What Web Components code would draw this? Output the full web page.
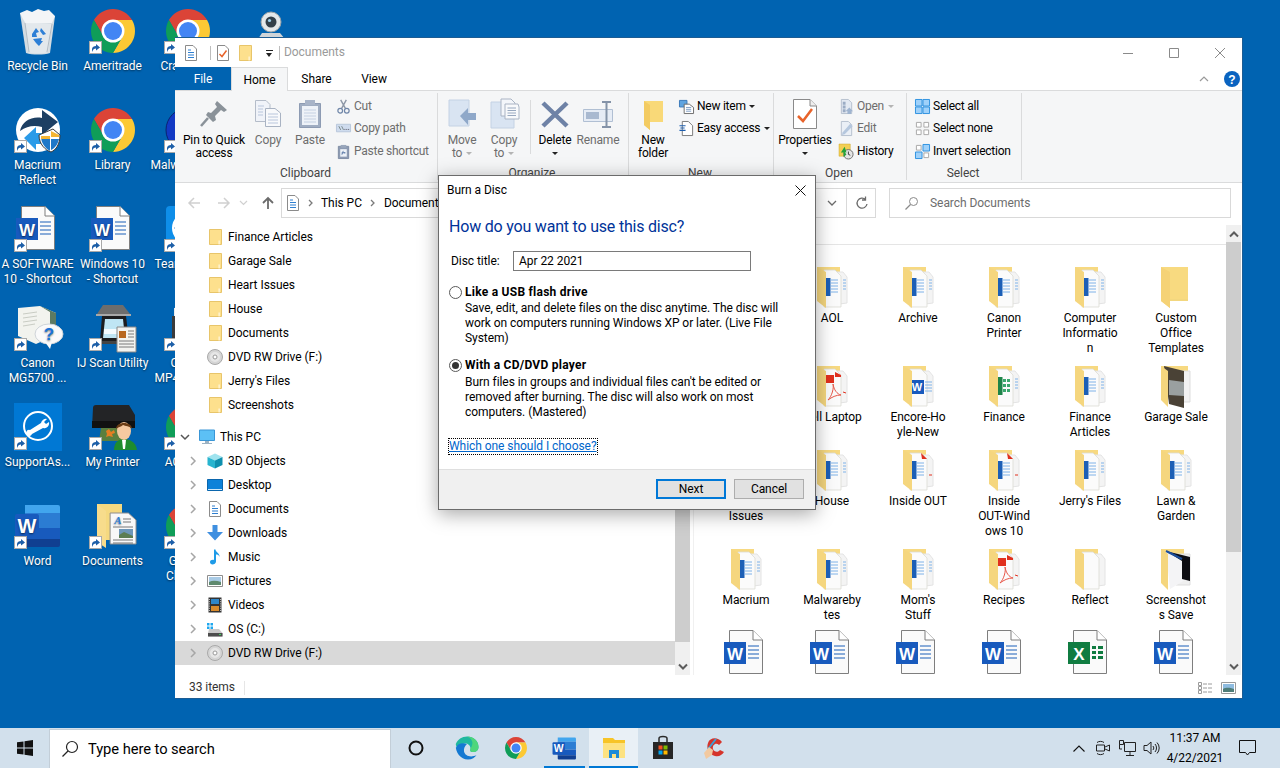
<!DOCTYPE html>
<html lang="en">
<head>
<meta charset="utf-8">
<title>Burn a Disc</title>
<style>
  html, body { margin: 0; height: 100%; overflow: hidden; }
  body {
    width: 1280px; height: 768px; background: #0063b1;
    font: 12px/15px Roboto, "Liberation Sans", sans-serif; color: #000; letter-spacing: -.05px;
    display: flex; flex-direction: column;
  }
</style>
</head>
<body>
<desk-top>
  <desk-icon icon="recycle">Recycle Bin</desk-icon>
  <desk-icon icon="macrium" link>Macrium<br>Reflect</desk-icon>
  <desk-icon icon="worddoc" link>A SOFTWARE<br>10 - Shortcut</desk-icon>
  <desk-icon icon="canonhelp" link>Canon<br>MG5700 ...</desk-icon>
  <desk-icon icon="support" link>SupportAs...</desk-icon>
  <desk-icon icon="wordapp" link>Word</desk-icon>

  <desk-icon icon="chrome" link>Ameritrade</desk-icon>
  <desk-icon icon="chrome" link>Library</desk-icon>
  <desk-icon icon="worddoc" link>Windows 10<br>- Shortcut</desk-icon>
  <desk-icon icon="scanner" link>IJ Scan Utility</desk-icon>
  <desk-icon icon="myprinter" link>My Printer</desk-icon>
  <desk-icon icon="docfolder" link>Documents</desk-icon>

  <desk-icon icon="chrome" link>CrashPlan</desk-icon>
  <desk-icon icon="malware" link>Malwarebytes</desk-icon>
  <desk-icon icon="teamviewer" link>TeamViewer</desk-icon>
  <desk-icon icon="printer2" link>Canon<br>MP495 ser...</desk-icon>
  <desk-icon icon="chrome" link>AC Units</desk-icon>
  <desk-icon icon="chrome" link>Google<br>Cloud ...</desk-icon>

  <desk-icon icon="webcam"></desk-icon>

  <explorer-window>
    <rib-group slot="ribbon" label="Clipboard" style="width:262px">
      <rib-big icon="pin" style="--w:76px" on>Pin to Quick<br>access</rib-big>
      <rib-big icon="copy" style="--w:32px">Copy</rib-big>
      <rib-big icon="paste" style="--w:52px">Paste</rib-big>
      <rib-col>
        <rib-small icon="cut">Cut</rib-small>
        <rib-small icon="copypath">Copy path</rib-small>
        <rib-small icon="pasteshort">Paste shortcut</rib-small>
      </rib-col>
    </rib-group>
    <rib-group slot="ribbon" label="Organize" style="width:191px">
      <rib-big icon="moveto" style="--w:48px">Move<br>to <rib-caret></rib-caret></rib-big>
      <rib-big icon="copyto" style="--w:36px">Copy<br>to <rib-caret></rib-caret></rib-big>
      <rib-sep></rib-sep>
      <rib-big icon="delete" style="--w:48px" on>Delete<br><rib-caret on></rib-caret></rib-big>
      <rib-big icon="rename" style="--w:38px">Rename</rib-big>
    </rib-group>
    <rib-group slot="ribbon" label="New" style="width:145px">
      <rib-big icon="newfolder" style="--w:48px" on>New<br>folder</rib-big>
      <rib-col style="margin-left:2px">
        <rib-small icon="newitem" on>New item <rib-caret on></rib-caret></rib-small>
        <rib-small icon="easy" on>Easy access <rib-caret on></rib-caret></rib-small>
      </rib-col>
    </rib-group>
    <rib-group slot="ribbon" label="Open" style="width:133px">
      <rib-big icon="properties" style="--w:62px" on>Properties<br><rib-caret on></rib-caret></rib-big>
      <rib-col style="margin-left:3px">
        <rib-small icon="open">Open <rib-caret></rib-caret></rib-small>
        <rib-small icon="edit">Edit</rib-small>
        <rib-small icon="history" on>History</rib-small>
      </rib-col>
    </rib-group>
    <rib-group slot="ribbon" label="Select" style="width:115px">
      <rib-col style="margin-left:8px">
        <rib-small icon="selall" on>Select all</rib-small>
        <rib-small icon="selnone" on>Select none</rib-small>
        <rib-small icon="selinv" on>Invert selection</rib-small>
      </rib-col>
    </rib-group>

    <nav-row slot="nav" icon="sfolder">Finance Articles</nav-row>
    <nav-row slot="nav" icon="sfolder">Garage Sale</nav-row>
    <nav-row slot="nav" icon="sfolder">Heart Issues</nav-row>
    <nav-row slot="nav" icon="sfolder">House</nav-row>
    <nav-row slot="nav" icon="sfolder">Documents</nav-row>
    <nav-row slot="nav" icon="dvd">DVD RW Drive (F:)</nav-row>
    <nav-row slot="nav" icon="sfolder">Jerry's Files</nav-row>
    <nav-row slot="nav" icon="sfolder">Screenshots</nav-row>
    <nav-row slot="nav" icon="pc" chev="down" top style="margin-top:8px">This PC</nav-row>
    <nav-row slot="nav" icon="cube" chev="right">3D Objects</nav-row>
    <nav-row slot="nav" icon="desktop" chev="right">Desktop</nav-row>
    <nav-row slot="nav" icon="sdoc" chev="right">Documents</nav-row>
    <nav-row slot="nav" icon="download" chev="right">Downloads</nav-row>
    <nav-row slot="nav" icon="music" chev="right">Music</nav-row>
    <nav-row slot="nav" icon="pictures" chev="right">Pictures</nav-row>
    <nav-row slot="nav" icon="videos" chev="right">Videos</nav-row>
    <nav-row slot="nav" icon="osdrive" chev="right">OS (C:)</nav-row>
    <nav-row slot="nav" icon="dvd" chev="right" selected>DVD RW Drive (F:)</nav-row>

    <file-tile slot="files" icon="fword"></file-tile>
    <file-tile slot="files" icon="fword">AOL</file-tile>
    <file-tile slot="files" icon="fword">Archive</file-tile>
    <file-tile slot="files" icon="fword">Canon<br>Printer</file-tile>
    <file-tile slot="files" icon="fword">Computer<br>Informatio<br>n</file-tile>
    <file-tile slot="files" icon="fplain">Custom<br>Office<br>Templates</file-tile>

    <file-tile slot="files" icon="fword"></file-tile>
    <file-tile slot="files" icon="fpdf">Dell Laptop</file-tile>
    <file-tile slot="files" icon="fwordbig">Encore-Ho<br>yle-New</file-tile>
    <file-tile slot="files" icon="fexcel">Finance</file-tile>
    <file-tile slot="files" icon="fword">Finance<br>Articles</file-tile>
    <file-tile slot="files" icon="fphoto">Garage Sale</file-tile>

    <file-tile slot="files" icon="fword">Heart<br>Issues</file-tile>
    <file-tile slot="files" icon="fword">House</file-tile>
    <file-tile slot="files" icon="fmix">Inside OUT</file-tile>
    <file-tile slot="files" icon="fmix">Inside<br>OUT-Wind<br>ows 10</file-tile>
    <file-tile slot="files" icon="fword">Jerry's Files</file-tile>
    <file-tile slot="files" icon="fword">Lawn &amp;<br>Garden</file-tile>

    <file-tile slot="files" icon="fword">Macrium</file-tile>
    <file-tile slot="files" icon="fword">Malwareby<br>tes</file-tile>
    <file-tile slot="files" icon="fword">Mom's<br>Stuff</file-tile>
    <file-tile slot="files" icon="fpdf">Recipes</file-tile>
    <file-tile slot="files" icon="fblank">Reflect</file-tile>
    <file-tile slot="files" icon="fdark">Screenshot<br>s Save</file-tile>

    <file-tile slot="files" icon="worddoc"></file-tile>
    <file-tile slot="files" icon="worddoc"></file-tile>
    <file-tile slot="files" icon="worddoc"></file-tile>
    <file-tile slot="files" icon="worddoc"></file-tile>
    <file-tile slot="files" icon="exceldoc"></file-tile>
    <file-tile slot="files" icon="worddoc"></file-tile>
  </explorer-window>

  <burn-dialog></burn-dialog>
</desk-top>
<task-bar></task-bar>

<script>
// every icon in one table, name -> [viewBox, svg body]
const W_TEXT = (x, y, s, c = '#fff') =>
  `<text x="${x}" y="${y}" font-family="Liberation Sans, sans-serif" font-weight="700" font-size="${s}" fill="${c}" text-anchor="middle">W</text>`;
const folderBase = inner => `
  <path d="M9 4H32V12H9Z" fill="#f7d981"/>
  <path d="M24 9H35L39 14V40L24 42Z" fill="#f4f4f4" stroke="#e4e4e4"/>
  <path d="M16 7H27L33 13V44H16Z" fill="#fbfbfb" stroke="#dcdcd4" stroke-width=".8"/>
  ${inner}
  <path d="M9 4L18 9V45L9 38Z" fill="#f5d67e"/>`;
const blueLines = `<path d="M22 17H30M22 20H30M22 23H30M22 26H30M22 29H30M35 17H38M35 20H38M35 23H38M35 26H38" stroke="#7fb2e8" stroke-width="1"/>`;
const chromeWedge = 'M4.95 13A22 22 0 0 1 43.05 13H24L14.5 29.5Z';
const CHROME = `
  <path d="${chromeWedge}" fill="#db4437"/>
  <path d="${chromeWedge}" fill="#fcc934" transform="rotate(120 24 24)"/>
  <path d="${chromeWedge}" fill="#0f9d58" transform="rotate(240 24 24)"/>
  <circle cx="24" cy="24" r="11.5" fill="#fff"/><circle cx="24" cy="24" r="9" fill="#4285f4"/>`;
const WORDAPP = `
  <path d="M11 3H44a2 2 0 0 1 2 2V11H11Z" fill="#41a5ee"/><path d="M11 11H46V26H11Z" fill="#2b7cd3"/>
  <path d="M11 26H46V37H11Z" fill="#185abd"/><path d="M11 37H46V43a2 2 0 0 1-2 2H13a2 2 0 0 1-2-2Z" fill="#103f91"/>
  <rect x="1" y="12" width="24" height="24" rx="2" fill="#185abd"/>${W_TEXT(13, 31, 20)}`;
const ICONS = {
  recycle: ['0 0 48 48', `
    <path d="M6 6L41 9 36 46C30 48 18 48 12 46Z" fill="#d4dce2"/>
    <path d="M6 6l7-3 5 2 6-3 6 2 5-1 6 6-3 7-26 1-3-5z" fill="#f3f5f7"/>
    <path d="M11 16L38 17 34 45C28 47 19 47 14 45Z" fill="#e3e8ec"/>
    <path d="M11 16l4 29M38 17l-5 28" stroke="#b3bcc4" stroke-width="1" fill="none"/>
    <path d="M18 27l4-6 3 4-3 1 1 4h-5zM27 21l5 6-3 1-3-4zM22 36l-3-4 9-1-1 3 2 0-4 5z" fill="#2d7fd6"/>`],
  macrium: ['0 0 48 48', `
    <circle cx="24" cy="24" r="22" fill="#fff"/>
    <path d="M6 25C8 15 18 10 28 12V4L44 16 28 29V21C20 19 13 20 6 25Z" fill="#1d3f63"/>
    <path d="M10 32L22 21V27H32V38H22V44Z" fill="#2b9be8"/>
    <path d="M25 29L39 23 46 29C46 38 42 44 37 46 31 44 25 38 25 29Z" fill="#fff" stroke="#3a3a3a"/>
    <path d="M36 25V45C31 42 27 37 27 30H36Z" fill="#1f78c8"/><path d="M37 25L45 29V31H37Z" fill="#f5b532"/><path d="M37 33H45C44 38 41 42 37 44Z" fill="#1f78c8"/><path d="M27 30H36V33H27Z" fill="#f5b532"/>`],
  worddoc: ['0 0 48 48', `
    <path d="M7.5 1.5H31L40.5 11V44.5H7.5Z" fill="#fafafa" stroke="#7e7e7e"/>
    <path d="M31 1.5V11H40.5" fill="#fff" stroke="#7e7e7e"/>
    <path d="M26 17H37M26 21H37M26 25H37M26 29H37" stroke="#1a5fb8"/>
    <rect x="2" y="13" width="22" height="22" fill="#185abd"/>${W_TEXT(13, 30.5, 17)}`],
  exceldoc: ['0 0 48 48', `
    <path d="M7.5 1.5H31L40.5 11V44.5H7.5Z" fill="#fafafa" stroke="#7e7e7e"/>
    <path d="M31 1.5V11H40.5" fill="#fff" stroke="#7e7e7e"/>
    <path d="M26 17h4v3h-4zM32 17h5v3h-5zM26 22h4v3h-4zM32 22h5v3h-5zM26 27h4v3h-4zM32 27h5v3h-5z" fill="#107c41"/>
    <rect x="2" y="13" width="22" height="22" fill="#107c41"/>
    <text x="13" y="30.5" font-family="Liberation Sans, sans-serif" font-weight="700" font-size="17" fill="#fff" text-anchor="middle">X</text>`],
  canonhelp: ['0 0 48 48', `
    <path d="M4 4L26 2 42 9V31L22 40 4 32Z" fill="#f2f3ee"/>
    <path d="M26 2L42 9V31L36 26V8Z" fill="#5c7a62"/>
    <path d="M9 10l14-2M9 14l14-2M9 18l14-2M9 22l12-2" stroke="#c9ccc4"/>
    <ellipse cx="35" cy="30" rx="14" ry="10" fill="#fafafa" stroke="#cfd4d8"/>
    <path d="M31 38l5 7 2-7Z" fill="#fafafa"/>
    <text x="35" y="36" font-family="Liberation Sans, sans-serif" font-weight="700" font-size="17" fill="#1a73d8" text-anchor="middle">?</text>`],
  support: ['0 0 48 48', `
    <rect width="48" height="48" fill="#0078d4"/>
    <circle cx="24" cy="23" r="14" fill="none" stroke="#fff" stroke-width="2"/>
    <path d="M16 27L27 20a5 5 0 0 1 6-4l-3 3 2 2 3-2a5 5 0 0 1-6 6L18 31a3 3 0 1 1-2-4Z" fill="#fff"/>`],
  wordapp: ['0 0 48 48', WORDAPP],
  chrome: ['0 0 48 48', CHROME],
  scanner: ['0 0 48 48', `
    <path d="M8 10L14 1H34L41 10Z" fill="#6d6d6d"/><path d="M7 10H42V12H7Z" fill="#a8a8a8"/>
    <path d="M13 12H37L40 37H11Z" fill="#1d1d1f"/><path d="M16 15H34L36 34H14Z" fill="#bfe5f4"/><path d="M15 25H36V30H15Z" fill="#f4fbff"/>
    <path d="M11 37H40V40H11Z" fill="#444"/>
    <path d="M28 23H47V48H28Z" fill="#f3f3f0" stroke="#888"/><path d="M30 27H37V34H30Z" fill="#b8671f"/>
    <path d="M39 27H45M39 30H45M39 33H45M30 37H45M30 40H45M30 43H45" stroke="#7a7a7a"/>`],
  myprinter: ['0 0 48 48', `
    <path d="M4 5a3 3 0 0 1 3-3H40L46 12V25H3Z" fill="#232426"/><path d="M3 18H46V25H3Z" fill="#111"/>
    <path d="M12 25H38L34 38H10Z" fill="#5b7f3e"/><path d="M17 28l3-2 2 3 3-2 1 3-3 1 1 3-4-1-3 1 1-3Z" fill="#e67e22"/>
    <path d="M25 47C25 38 31 36 35 36S47 38 48 47Z" fill="#1e8c2d"/><path d="M33 37h4l-1 9h-2Z" fill="#fff"/>
    <ellipse cx="35" cy="28" rx="7" ry="9" fill="#f5c9a0"/><path d="M27 26C27 18 43 18 43 26 41 23 36 23 34 22 32 24 29 24 27 26Z" fill="#6b3d16"/>`],
  docfolder: ['0 0 48 48', `
    <path d="M8 2H33V38H8Z" fill="#f5d980"/>
    <path d="M8 2L17 9V46L8 40Z" fill="#f7dc8c"/>
    <path d="M22 11H41L49 18V42H22Z" transform="scale(.96 1)" fill="#f8f8f8" stroke="#8b8b8b"/>
    <text x="29" y="22" font-family="Liberation Serif, serif" font-style="italic" font-weight="700" font-size="11" fill="#2b7cd3" text-anchor="middle">A</text>
    <path d="M34 17h8M34 20h8M24 25h20M24 38h20M24 41h20" stroke="#777"/>
    <path d="M30 27H44V36H30Z" fill="#6d96b8"/><path d="M30 33l5-3 9 4v2H30Z" fill="#5c7d52"/>`],
  malware: ['0 0 48 48', `<circle cx="24" cy="24" r="22" fill="#1239c4" stroke="#0b2270"/>`],
  teamviewer: ['0 0 48 48', `
    <rect x="2" y="1" width="44" height="44" rx="4" fill="#0e8ee9"/>
    <circle cx="24" cy="23" r="16" fill="#fff"/><path d="M10 23l10-7v4h8v-4l10 7-10 7v-4h-8v4Z" fill="#0e6fc4"/>`],
  printer2: ['0 0 48 48', `
    <path d="M10 4L30 2 40 12H10Z" fill="#ececec"/><path d="M8 12H42V34H8Z" fill="#3b3b3b"/><path d="M12 26H38V44H12Z" fill="#f2f2f2"/>`],
  webcam: ['0 0 48 48', `
    <circle cx="32" cy="15" r="10" fill="#e4e8ea" stroke="#9ba3a8"/><circle cx="32" cy="15" r="5.5" fill="#33404a"/><circle cx="30.5" cy="13.5" r="1.6" fill="#9fd3ee"/>
    <path d="M23 26h18l5 6H19Z" fill="#cfd4d8"/>`],

  // large folders in the file list
  fplain: ['0 0 48 48', `<path d="M9 4H36V36H18V45L9 38Z" fill="#f8da80"/><path d="M9 4L18 9V45L9 38Z" fill="#f5d276"/><path d="M18 36H36V38H18Z" fill="#f3d77f"/>`],
  fword: ['0 0 48 48', folderBase(`<path d="M18 15h4.5v18H18Z" fill="#1c5fb6"/>${blueLines}`)],
  fwordbig: ['0 0 48 48', folderBase(`<rect x="16" y="18" width="14" height="14" fill="#185abd"/>${W_TEXT(23, 29, 11)}<path d="M31 20H38M31 23H38M31 26H38M31 29H38" stroke="#7fb2e8"/>`)],
  fexcel: ['0 0 48 48', folderBase(`<path d="M18 15h4.5v18H18Z" fill="#1e8449"/><path d="M23 17h3v3h-3zM27 17h3v3h-3zM23 22h3v3h-3zM27 22h3v3h-3zM23 27h3v3h-3zM27 27h3v3h-3z" fill="#3aa76d"/><path d="M35 17H38M35 20H38M35 23H38M35 26H38" stroke="#7fb2e8"/>`)],
  fpdf: ['0 0 48 48', folderBase(`<path d="M18 13h8v8h-8Z" fill="#e0301e"/><path d="M27 10L33 13V15H27Z" fill="#e0301e"/><path d="M20 38C24 34 26 26 25 22 26 28 29 32 33 33 28 33 24 35 20 38Z" fill="none" stroke="#e8584a"/><path d="M35 30l3 1" stroke="#e0301e"/>`)],
  fmix: ['0 0 48 48', folderBase(`<path d="M18 15h4.5v18H18Z" fill="#1c5fb6"/><path d="M22 17H30M22 20H30M22 23H30M22 26H30M22 29H30" stroke="#7fb2e8"/><path d="M27 7L33 13H28Z" fill="#e0301e"/><path d="M35 29h3" stroke="#e0301e"/>`)],
  fblank: ['0 0 48 48', folderBase('')],
  fphoto: ['0 0 48 48', `
    <path d="M9 4H36V12H9Z" fill="#f7d981"/><path d="M24 9H38V40H24Z" fill="#f2f2f2" stroke="#ddd"/>
    <path d="M12 4L32 9V46L17 42Z" fill="#4a4236"/><path d="M17 18L32 20V34L17 33Z" fill="#9aa0a0"/>
    <path d="M9 4L16 9V45L9 38Z" fill="#f5d67e"/>`],
  fdark: ['0 0 48 48', `
    <path d="M9 4H32V12H9Z" fill="#f7d981"/><path d="M24 9H38V40H24Z" fill="#efefef" stroke="#ddd"/>
    <path d="M14 6L38 12V32L18 44Z" fill="#f4f4f6"/><path d="M14 6L38 12V36L30 34V16Z" fill="#0d0d12"/><path d="M14 6L30 14" stroke="#1d4f9c" stroke-width="2"/>
    <path d="M9 4L16 9V45L9 38Z" fill="#f5d67e"/>`],

  // 16px nav and toolbar glyphs
  sfolder: ['0 0 16 16', `<path d="M2.5.5H14.5V15.5H2.5Z" fill="#fde08d" stroke="#e8c56a"/><path d="M11.5 15.5V11.5H12.8V15.5" fill="#fff" opacity=".7"/>`],
  dvd: ['0 0 16 16', `<circle cx="8" cy="8" r="7.5" fill="#d5d5d5" stroke="#a9a9a9"/><circle cx="8" cy="8" r="5" fill="#e6e6e6"/><circle cx="8" cy="8" r="2" fill="#fff" stroke="#9a9a9a"/>`],
  pc: ['0 0 16 16', `<path d="M.5 1H15.5V11.5H.5Z" fill="#5cc0f5" stroke="#3a96d6"/><path d="M6 12H10V14H13V15H3V14H6Z" fill="#9db3c4"/>`],
  cube: ['0 0 16 16', `<path d="M8 .5L15.5 4 8 7.5 .5 4Z" fill="#9fe3ee"/><path d="M.5 4L8 7.5V15.5L.5 12Z" fill="#27b4cf"/><path d="M15.5 4V12L8 15.5V7.5Z" fill="#0e8fae"/>`],
  desktop: ['0 0 16 16', `<path d="M.5 2.5H15.5V13.5H.5Z" fill="#0d82d9" stroke="#0b66ad"/><path d="M1 12.5H15" stroke="#cfe8fa"/>`],
  sdoc: ['0 0 16 16', `<path d="M2.5.5H10L13.5 4V15.5H2.5Z" fill="#fff" stroke="#8b8b8b"/><path d="M5 5H8M5 7.5H11M5 10H11M5 12.5H11" stroke="#2f7fd0"/>`],
  download: ['0 0 16 16', `<path d="M5.5 0H10.5V7H16L8 15.5 0 7H5.5Z" fill="#3f8fe0"/>`],
  music: ['0 0 16 16', `<path d="M7 .5H8.5C9 4 13 4 12.5 8 12 6 10.5 5.5 9 5.5V12.5C9 14.5 7 15.5 5.5 15.5S3 14.5 3 13 5 10.5 7 11Z" fill="#1e9be8"/>`],
  pictures: ['0 0 16 16', `<path d="M.5 2.5H15.5V13.5H.5Z" fill="#fff" stroke="#8d8d8d"/><path d="M2 4H14V12H2Z" fill="#a9cbe6"/><path d="M2 9C6 7 10 8 14 9V12H2Z" fill="#5f8a6f"/>`],
  videos: ['0 0 16 16', `<path d="M1.5 .5H14.5V15.5H1.5Z" fill="#333"/><path d="M4 2H12V7H4Z" fill="#2e86c9"/><path d="M4 9H12V14H4Z" fill="#d98b2c"/><path d="M2.3 2v12M13.7 2v12" stroke="#ddd" stroke-dasharray="1 1.2"/>`],
  osdrive: ['0 0 16 16', `<path d="M0 2h2.500v2.500H0zM3.500 2H6v2.500H3.500zM0 5.500h2.500V8H0zM3.500 5.500H6V8H3.500z" fill="#1ea7ef"/><path d="M2 8H12L15.500 12V15.500H1V12Z" fill="#c9c9c9"/><path d="M1 12H15.500V15.500H1Z" fill="#4d4d4d"/><path d="M12 13.500h2" stroke="#3ed45a"/>`],

  // ribbon
  pin: ['0 0 32 32', `<path d="M19 3L29 12 26 14 23 12 17 18 18 22 15 24 8 17 10 14 13 15 19 9 17 6Z" fill="#8a9299"/><path d="M10 20L3 28" stroke="#8a9299" stroke-width="2.500"/>`],
  copy: ['0 0 32 32', `<path d="M3.500 2.500H14L18 6.500V23.500H3.500Z" fill="#f0f3f9" stroke="#b4bcc9"/><path d="M13.500 10.500H23L28.500 15V28.500H13.500Z" fill="#f8f9fb" stroke="#a9b3c3"/><path d="M6 8H12M6 11H11M6 14H11M6 17H11M16 16H26M16 19H26M16 22H26M16 25H26" stroke="#b9c6dc"/>`],
  paste: ['0 0 32 32', `<path d="M5.500 5.500H26.500V29.500H5.500Z" fill="#a0adc2" stroke="#8d9bb3"/><path d="M8 8H24V27H8Z" fill="#eef2f8"/><path d="M11 2H21V7H11Z" fill="#a8b4c8"/><path d="M10 12H22M10 15H22M10 18H22M10 21H22M10 24H22" stroke="#c4d0e2"/>`],
  cut: ['0 0 16 16', `<path d="M5 1L10 10M11 1L6 10" stroke="#8d97a6" stroke-width="1.500"/><circle cx="4.500" cy="12.500" r="2.500" fill="none" stroke="#6f86a8" stroke-width="1.300"/><circle cx="11.500" cy="12.500" r="2.500" fill="none" stroke="#6f86a8" stroke-width="1.300"/>`],
  copypath: ['0 0 16 16', `<path d="M.5 3.500H15.500V11.500H.5Z" fill="#cfdcee" stroke="#b7c6db"/><path d="M3 5.500l2 4M6 5.500l2 4" stroke="#778888"/><path d="M9 9h1M11 9h1M13 9h1" stroke="#555566"/>`],
  pasteshort: ['0 0 16 16', `<path d="M2.500 2.500H13.500V15.500H2.500Z" fill="#8d9bb3" stroke="#7d8ba3"/><path d="M5 1H11V4H5Z" fill="#9aa7bc"/><path d="M4.500 5.500H11.500V13.500H4.500Z" fill="#eef2f8"/><path d="M6 12V9L8 7V8.500H10V10H8V9L7 11Z" fill="#6d87b0"/>`],
  moveto: ['0 0 32 32', `<path d="M3 2H23V28H3Z" fill="#d9e4f2" stroke="#c4d2e4"/><path d="M14 18L22 10V15H30V22H22V27Z" fill="#8fa8c9"/>`],
  copyto: ['0 0 32 32', `<path d="M3 4H26V30H3Z" fill="#d9e4f2" stroke="#c4d2e4"/><path d="M13 1H23L27 5V18H13Z" fill="#f4f6fa" stroke="#aab4c4"/><path d="M17 6H30L31 9V21H17Z" fill="#f8f9fb" stroke="#aab4c4"/><path d="M19.500 10H28M19.500 12.500H28M19.500 15H28M19.500 17.500H28" stroke="#98a8bf"/>`],
  delete: ['0 0 32 32', `<path d="M4 5L28 28M28 5L4 28" stroke="#6e82a6" stroke-width="4.500"/>`],
  rename: ['0 0 32 32', `<path d="M1.500 11.500H30.500V23.500H1.500Z" fill="#e6ecf5" stroke="#b0bfd3"/><path d="M4 14H17V21H4Z" fill="#a9b9d0"/><path d="M20 4H24.500M29 4H24.500V29M20 29H29" stroke="#8493a8" stroke-width="2" fill="none"/>`],
  newfolder: ['0 0 32 32', `<path d="M7 3H26V24H13V32L7 27Z" fill="#f9d978"/><path d="M7 3L13 7V32L7 27Z" fill="#f3cb62"/>`],
  newitem: ['0 0 16 16', `<path d="M.5 1.500H8.500V8.500H.5Z" fill="#5fa4e0" stroke="#3977b8"/><path d="M5.500 5.500H11L15.500 9V15.500H5.500Z" fill="#fff" stroke="#6a6a6a"/><path d="M7.500 9H13M7.500 11H13M7.500 13H13" stroke="#7b9cc4"/>`],
  easy: ['0 0 16 16', `<path d="M3.500 .5H10L14.500 5V15.500H3.500Z" fill="#fff" stroke="#777"/><path d="M.5 5H7M1.500 7.500H6M.5 10H7" stroke="#1d5fb0" stroke-width="1.200"/>`],
  properties: ['0 0 32 32', `<path d="M4.500 1.500H21L27.500 8V30.500H4.500Z" fill="#fff" stroke="#8a8a8a"/><path d="M21 1.500V8H27.500" fill="#eee" stroke="#8a8a8a"/><path d="M9 18L14 23 23 11" fill="none" stroke="#e8632a" stroke-width="2.500"/>`],
  qatcheck: ['0 0 16 16', `<path d="M2.500 .5H10L13.500 4V15.500H2.500Z" fill="#fff" stroke="#8a8a8a"/><path d="M4.500 9L7 11.500 11.500 5.500" fill="none" stroke="#e8632a" stroke-width="1.500"/>`],
  open: ['0 0 16 16', `<path d="M2.500 .5H10L13.500 4V15.500H2.500Z" fill="#e3e9f2" stroke="#b4bfce"/><path d="M4 3h3v3H4zM4 7h3v3H4zM4 11h3v3H4z" fill="#9bacc4"/><path d="M11 9L15 13H13V16H9V13H7Z" fill="#9fb4d0"/>`],
  edit: ['0 0 16 16', `<path d="M2.500 .5H10L13.500 4V15.500H2.500Z" fill="#eaeff6" stroke="#b4bfce"/><path d="M12 3L14.500 5.500 6 14 3 15 4 12Z" fill="#b5c7de"/>`],
  history: ['0 0 16 16', `<path d="M0 0H12V13H0Z" fill="#f3cf55" stroke="#c9a227" stroke-width=".5"/><circle cx="10" cy="11" r="5" fill="#e5e5e5" stroke="#6b6b6b"/><path d="M10 8V11L12 12" stroke="#333" fill="none"/><path d="M6 3L2 9H5V14L8 11 6 9H8Z" fill="#24a339"/>`],
  selall: ['0 0 16 16', `<path d="M.5 .5H7.500V7.500H.5ZM8.500 .5H15.500V7.500H8.500ZM.5 8.500H7.500V15.500H.5ZM8.500 8.500H15.500V15.500H8.500Z" fill="#9fd1fa" stroke="#2a8fdf"/>`],
  selnone: ['0 0 16 16', `<path d="M1.500 1.500H6.500V6.500H1.500ZM9.500 1.500H14.500V6.500H9.500ZM1.500 9.500H6.500V14.500H1.500ZM9.500 9.500H14.500V14.500H9.500Z" fill="#fff" stroke="#a6a6a6"/>`],
  selinv: ['0 0 16 16', `<path d="M1.500 1.500H6.500V6.500H1.500ZM9.500 9.500H14.500V14.500H9.500Z" fill="#fff" stroke="#a6a6a6"/><path d="M8.500 .5H15.500V7.500H8.500ZM.5 8.500H7.500V15.500H.5Z" fill="#9fd1fa" stroke="#2a8fdf"/>`],

  // taskbar
  edge: ['0 0 24 24', `
    <path d="M12 .5C18.500.5 23.500 5 23.500 11 23.500 15 20 16.500 17 16 14.500 15.500 15.500 13.500 15.500 12.500 15.500 9.500 13 7.500 10 7.500 6 7.500 3.500 10.500 3 13 2 11 .5 9 .8 8 2.500 3.500 7 .5 12 .5Z" fill="#1fb8a0"/>
    <path d="M.8 9C.2 16 5.500 23.500 13 23.500 17 23.500 20 21.500 21.500 19 16 22 10 20 9 15.500 8.500 12.500 10 9.500 12 8 7.500 6.500 2.500 7.500.8 12Z" fill="#1479d2"/>
    <path d="M15.500 12.500C15 14.500 15 15.500 17 16 20 16.500 23.500 15 23.500 11 23.500 5 18.500.5 12 .5 16 2 20 6 15.500 12.500Z" fill="#4fd67b"/>`],
  wordtask: ['0 0 48 48', WORDAPP],
  explorer: ['0 0 24 24', `<path d="M1 2H11L13 4H23V22H1Z" fill="#f7c427"/><path d="M1 7H23V22H1Z" fill="#fde281"/><path d="M7 14H17V22H14V18H10V22H7Z" fill="#1c8bd8"/>`],
  store: ['0 0 24 24', `<path d="M8 6V2.500C8 1 9 .5 12 .5S16 1 16 2.500V6" fill="none" stroke="#2a2a2a" stroke-width="1.500"/><path d="M2 6H22V23H2Z" fill="#262626"/><path d="M7.500 9.500H11.500V13.500H7.500Z" fill="#f25022"/><path d="M12.500 9.500H16.500V13.500H12.500Z" fill="#7fba00"/><path d="M7.500 14.500H11.500V18.500H7.500Z" fill="#00a4ef"/><path d="M12.500 14.500H16.500V18.500H12.500Z" fill="#ffb900"/>`],
  ccleaner: ['0 0 24 24', `<path d="M20 6C16 1 8 1 6 7 4 12 7 19 13 20 17 21 20 19 22 16L18 14C16 17 12 16 11 13 10 9 14 6 17 9Z" fill="#d5342b"/><path d="M14 3L6 13" stroke="#3ba0d8" stroke-width="2"/><path d="M7 11L2 17 4 23 10 19 11 14Z" fill="#f2c9a0"/>`]
};

class WinIcon extends HTMLElement {
  connectedCallback() {
    const [vb, body] = ICONS[this.getAttribute('name')] || ['0 0 16 16', ''];
    const s = this.getAttribute('size') || 16;
    this.attachShadow({ mode: 'open' }).innerHTML = `
      <style>:host{display:block;width:${s}px;height:${s}px;flex:none} svg{display:block;overflow:visible}</style>
      <svg xmlns="http://www.w3.org/2000/svg" width="${s}" height="${s}" viewBox="${vb}">${body}</svg>`;
  }
}
customElements.define('win-icon', WinIcon);

class DeskTop extends HTMLElement {
  constructor() {
    super();
    this.attachShadow({ mode: 'open' }).innerHTML = `
      <style>
        :host { display:block; position:relative; flex:1; min-height:0; overflow:hidden; }
        .grid { display:grid; grid-auto-flow:column; grid-template-rows:repeat(6,99px); grid-auto-columns:75px; padding-top:3px; }
      </style>
      <div class="grid"><slot></slot></div>`;
  }
}
customElements.define('desk-top', DeskTop);

class DeskIcon extends HTMLElement {
  connectedCallback() {
    const link = this.hasAttribute('link')
      ? `<svg class="link" width="13" height="13" viewBox="0 0 13 13"><rect x=".5" y=".5" width="12" height="12" fill="#fff" stroke="#a9a9a9"/><path d="M3 11V8C3 6 5 5 7 5V3L11 6.500 7 9.500V7.500C5 7.500 4 8.500 3 11Z" fill="#1d5fa8"/></svg>` : '';
    this.attachShadow({ mode: 'open' }).innerHTML = `
      <style>
        :host { display:flex; flex-direction:column; align-items:center; padding-top:4px; color:#fff; text-shadow:0 1px 2px rgba(0,0,0,.55); }
        .ico { position:relative; width:48px; height:48px; }
        .link { position:absolute; left:0; bottom:1px; }
        .txt { margin-top:4px; width:75px; text-align:center; white-space:nowrap; display:flex; justify-content:center; }
        .txt span { display:block; }
      </style>
      <div class="ico"><win-icon name="${this.getAttribute('icon')}" size="48"></win-icon>${link}</div>
      <div class="txt"><span><slot></slot></span></div>`;
  }
}
customElements.define('desk-icon', DeskIcon);

class ExplorerWindow extends HTMLElement {
  constructor() {
    super();
    this.attachShadow({ mode: 'open' }).innerHTML = `
      <style>
        :host { position:absolute; left:175px; top:37px; width:1068px; height:662px; box-sizing:border-box; border:1px solid #1c5c93; border-left:0; padding-left:1px; background:#fff; display:flex; flex-direction:column; }
        .title { height:29px; display:flex; align-items:center; flex:none; padding-left:7px; }
        .title win-icon { margin-right:6px; }
        .qsep { width:1px; height:14px; background:#bdbdbd; margin:0 4px 0 1px; }
        .qarrow { width:8px; height:9px; margin:0 11px 0 1px; display:flex; flex-direction:column; align-items:center; justify-content:flex-end; }
        .qarrow i { width:7px; height:1px; background:#222; margin-bottom:2px; } .qarrow b { border:3.500px solid transparent; border-top:4px solid #222; border-bottom:0; }
        .name { color:#9a9a9a; }
        .caps { margin-left:auto; margin-right:-1px; display:flex; align-items:center; }
        .caps svg { display:block; }
        .tabs { height:23px; flex:none; display:flex; align-items:stretch; border-bottom:1px solid #dadbdc; margin-left:-1px; padding-left:1px; position:relative; }
        .tab { width:56px; display:flex; align-items:center; justify-content:center; padding-top:1px; }
        .file { background:#0063b1; color:#fff; width:56px; margin-left:-1px; }
        .home { width:57px; border:1px solid #dadbdc; border-bottom:none; background:#f5f6f7; height:24px; box-sizing:border-box; margin-bottom:-1px; position:relative; z-index:1; }
        .plain { width:57px; } .view { width:56px; margin-left:1px; }
        .help { margin-left:auto; display:flex; align-items:center; gap:14px; position:relative; right:2px; }
        .ribbon { height:91px; flex:none; background:#f5f6f7; border-bottom:1px solid #dadbdc; display:flex; margin-left:-1px; padding-left:1px; }
        .addr { height:42px; flex:none; display:flex; align-items:flex-start; padding-top:5px; box-sizing:border-box; }
        .navbtns { width:105px; height:30px; flex:none; display:flex; align-items:center; padding-left:11px; box-sizing:border-box; }
        .box { height:30px; box-sizing:border-box; border:1px solid #d9d9d9; display:flex; align-items:center; }
        .path { width:595px; position:relative; }
        .path .t { white-space:nowrap; }
        .search { width:342px; margin-left:13px; color:#6d6d6d; padding-left:14px; gap:11px; }
        .main { flex:1; min-height:0; display:flex; margin-left:-1px; }
        .nav { width:500px; flex:none; overflow:hidden; }
        .sb1 { width:15px; flex:none; background:#f0f0f0; display:flex; flex-direction:column; }
        .thumb { background:#cdcdcd; }
        .arrow { height:17px; flex:none; display:flex; align-items:center; justify-content:center; }
        .gut { width:3px; flex:none; border-right:1px solid #f0f0f0; }
        .list { flex:1; min-width:0; overflow:hidden; padding:19px 0 0 9px; position:relative; }
        .hr { height:1px; background:#e5e5e5; width:526px; margin-bottom:20px; }
        .grid { display:grid; grid-template-columns:repeat(6,86px); }
        .sb2 { width:15px; flex:none; margin-right:1px; background:#f0f0f0; display:flex; flex-direction:column; }
        .status { height:23px; box-sizing:border-box; padding:2px 0 0 13px; flex:none; display:flex; align-items:center; color:#333; position:relative; }
        .status .sep { width:1px; height:14px; background:#e6e6e6; margin-left:9px; }
        .views { margin-left:auto; display:flex; gap:7px; margin-right:6px; }
      </style>
      <div class="title">
        <win-icon name="sdoc" style="margin-right:10px"></win-icon><div class="qsep"></div>
        <win-icon name="qatcheck"></win-icon>
        <win-icon name="sfolder" style="margin-right:11px"></win-icon>
        <div class="qarrow"><i></i><b></b></div><div class="qsep" style="margin:0 4px 0 -5px"></div>
        <div class="name">Documents</div>
        <div class="caps">
          <svg width="46" height="12" viewBox="0 0 46 12"><path d="M18 6.500H28" stroke="#8a8a8a"/></svg>
          <svg width="46" height="12" viewBox="0 0 46 12"><path d="M18.500 1.500H27.500V10.500H18.500Z" fill="none" stroke="#8a8a8a"/></svg>
          <svg width="46" height="12" viewBox="0 0 46 12"><path d="M18 1L28 11M28 1L18 11" stroke="#8a8a8a"/></svg>
        </div>
      </div>
      <div class="tabs">
        <div class="tab file">File</div><div class="tab home">Home</div><div class="tab plain">Share</div><div class="tab view">View</div>
        <div class="help">
          <svg width="12" height="8" viewBox="0 0 12 8"><path d="M2 6L6 2 10 6" fill="none" stroke="#9a9a9a" stroke-width="1.200"/></svg>
          <svg width="16" height="16" viewBox="0 0 16 16"><circle cx="8" cy="8" r="8" fill="#0a63c0"/><text x="8" y="12.500" text-anchor="middle" font-family="Liberation Sans,sans-serif" font-weight="700" font-size="12" fill="#fff">?</text></svg>
        </div>
      </div>
      <div class="ribbon"><slot name="ribbon"></slot></div>
      <div class="addr">
        <div class="navbtns">
          <svg width="14" height="14" viewBox="0 0 14 14"><path d="M13 7H2M7 2L2 7 7 12" fill="none" stroke="#d0d0d0" stroke-width="1.500"/></svg>
          <svg style="margin-left:16px" width="14" height="14" viewBox="0 0 14 14"><path d="M1 7H12M7 2L12 7 7 12" fill="none" stroke="#d0d0d0" stroke-width="1.500"/></svg>
          <svg style="margin-left:8px" width="9" height="8" viewBox="0 0 9 8"><path d="M1 2L4.500 5.500 8 2" fill="none" stroke="#d0d0d0" stroke-width="1.200"/></svg>
          <svg style="margin-left:13px" width="14" height="14" viewBox="0 0 14 14"><path d="M7 13V2M2 7L7 2 12 7" fill="none" stroke="#6b6b6b" stroke-width="1.800"/></svg>
        </div>
        <div class="box path">
          <win-icon name="sdoc" style="margin-left:3px"></win-icon>
          <svg style="margin:0 7px 0 7px" width="6" height="8" viewBox="0 0 6 8"><path d="M1 1L4 4 1 7" fill="none" stroke="#7a7a7a" stroke-width="1.300"/></svg>
          <span class="t">This PC</span>
          <svg style="margin:0 8px 0 8px" width="6" height="8" viewBox="0 0 6 8"><path d="M1 1L4 4 1 7" fill="none" stroke="#7a7a7a" stroke-width="1.300"/></svg>
          <span class="t">Documents</span>
          <svg style="position:absolute;right:38px;top:10px" width="10" height="8" viewBox="0 0 10 8"><path d="M1 2L5 6 9 2" fill="none" stroke="#6b6b6b" stroke-width="1.300"/></svg>
          <div style="position:absolute;right:28px;top:0;height:28px;width:1px;background:#d9d9d9"></div>
          <svg style="position:absolute;right:6px;top:7px" width="14" height="14" viewBox="0 0 14 14"><path d="M10.500 3.500A5 5 0 1 0 12 8M10.500 0.500V4H7" fill="none" stroke="#6b6b6b" stroke-width="1.300"/></svg>
        </div>
        <div class="box search">
          <svg width="15" height="15" viewBox="0 0 15 15"><circle cx="9.500" cy="5.500" r="4" fill="none" stroke="#8a8a8a"/><path d="M6.500 8.500L1.500 13.500" stroke="#8a8a8a" stroke-width="1.200"/></svg>
          <span>Search Documents</span>
        </div>
      </div>
      <div class="main">
        <div class="nav"><slot name="nav"></slot></div>
        <div class="sb1">
          <div class="thumb" style="flex:1"></div>
          <div style="height:33px;display:flex;align-items:flex-end;justify-content:center;padding-bottom:4px;box-sizing:border-box">
            <svg width="10" height="8" viewBox="0 0 10 8"><path d="M1 1.500L5 5.500 9 1.500" fill="none" stroke="#5c5c5c" stroke-width="2"/></svg>
          </div>
        </div>
        <div class="gut"></div>
        <div class="list"><div class="hr"></div><div class="grid"><slot name="files"></slot></div></div>
        <div class="sb2">
          <div class="arrow"><svg width="10" height="8" viewBox="0 0 10 8"><path d="M1 6.500L5 2.500 9 6.500" fill="none" stroke="#5c5c5c" stroke-width="2"/></svg></div>
          <div class="thumb" style="height:310px"></div>
          <div style="flex:1"></div>
          <div class="arrow"><svg width="10" height="8" viewBox="0 0 10 8"><path d="M1 1.500L5 5.500 9 1.500" fill="none" stroke="#5c5c5c" stroke-width="2"/></svg></div>
        </div>
      </div>
      <div class="status">
        <span>33 items</span><div class="sep"></div>
        <div class="views">
          <svg width="16" height="14" viewBox="0 0 16 14"><path d="M.5 1.500h3v3h-3zM.5 5.500h3v3h-3zM.5 9.500h3v3h-3z" fill="none" stroke="#9a9a9a"/><path d="M5 3H15M5 7H15M5 11H15" stroke="#9a9a9a" stroke-dasharray="4 1"/></svg>
          <svg width="15" height="14" viewBox="0 0 15 14"><path d="M.5 1.500H14.500V12.500H.5Z" fill="#fff" stroke="#9a9a9a"/><path d="M2 3H13V11H2Z" fill="#8fbce0"/><path d="M2 8C6 6 9 7 13 8V11H2Z" fill="#4f7d78"/></svg>
        </div>
      </div>`;
  }
}
customElements.define('explorer-window', ExplorerWindow);

class RibGroup extends HTMLElement {
  connectedCallback() {
    this.attachShadow({ mode: 'open' }).innerHTML = `
      <style>
        :host { display:flex; flex-direction:column; flex:none; box-sizing:border-box; position:relative; color:#000; }
        :host::after { content:""; position:absolute; right:0; top:2px; bottom:2px; width:1px; background:#dadbdc; }
        .body { flex:1; display:flex; min-height:0; }
        .label { height:18px; text-align:center; line-height:18px; color:#444; flex:none; padding-right:3px; }
      </style>
      <div class="body"><slot></slot></div>
      <div class="label">${this.getAttribute('label')}</div>`;
  }
}
customElements.define('rib-group', RibGroup);

class RibBig extends HTMLElement {
  connectedCallback() {
    this.attachShadow({ mode: 'open' }).innerHTML = `
      <style>
        :host { display:flex; flex-direction:column; align-items:center; flex:none; width:var(--w); padding-top:7px; box-sizing:border-box; color:#6d6d6d; text-align:center; line-height:13px; white-space:nowrap; letter-spacing:-.15px; }
        :host([on]) { color:#000; }
        win-icon { margin-bottom:4px; }
      </style>
      <win-icon name="${this.getAttribute('icon')}" size="32"></win-icon>
      <div><slot></slot></div>`;
  }
}
customElements.define('rib-big', RibBig);

class RibCol extends HTMLElement {
  constructor() {
    super();
    this.attachShadow({ mode: 'open' }).innerHTML = `
      <style>:host { display:flex; flex-direction:column; padding-top:4px; flex:none; }</style><slot></slot>`;
  }
}
customElements.define('rib-col', RibCol);

class RibSmall extends HTMLElement {
  connectedCallback() {
    this.attachShadow({ mode: 'open' }).innerHTML = `
      <style>
        :host { display:flex; align-items:center; gap:3px; height:22.500px; color:#6d6d6d; white-space:nowrap; letter-spacing:-.25px; }
        :host([on]) { color:#000; }
      </style>
      <win-icon name="${this.getAttribute('icon')}" size="15"></win-icon><span><slot></slot></span>`;
  }
}
customElements.define('rib-small', RibSmall);

class RibCaret extends HTMLElement {
  constructor() {
    super();
    this.attachShadow({ mode: 'open' }).innerHTML = `
      <style>
        :host { display:inline-block; width:0; height:0; vertical-align:2px; margin-left:1px; border:3px solid transparent; border-top:3px solid #b4b4b4; border-bottom:0; }
        :host([on]) { border-top-color:#222; }
      </style>`;
  }
}
customElements.define('rib-caret', RibCaret);

class RibSep extends HTMLElement {
  constructor() {
    super();
    this.attachShadow({ mode: 'open' }).innerHTML = `<style>:host { display:block; flex:none; width:1px; height:54px; background:#dadbdc; margin:9px 0 0 8px; }</style>`;
  }
}
customElements.define('rib-sep', RibSep);

class NavRow extends HTMLElement {
  connectedCallback() {
    const top = this.hasAttribute('top');
    const chev = this.getAttribute('chev');
    let c = '';
    if (chev === 'right') c = `<svg width="16" height="16" viewBox="0 0 16 16"><path d="M6 4L10 8 6 12" fill="none" stroke="#a6a6a6" stroke-width="1.500"/></svg>`;
    if (chev === 'down') c = `<svg width="16" height="16" viewBox="0 0 16 16"><path d="M4 6L8 10 12 6" fill="none" stroke="#555" stroke-width="1.500"/></svg>`;
    this.attachShadow({ mode: 'open' }).innerHTML = `
      <style>
        :host { display:flex; align-items:center; height:24px; padding-left:${top ? 2 : 10}px; white-space:nowrap; }
        :host([selected]) { background:#d9d9d9; }
        .c { width:16px; height:16px; flex:none; }
        win-icon { margin:0 5px 0 6px; }
      </style>
      <div class="c">${c}</div><win-icon name="${this.getAttribute('icon')}"></win-icon><span><slot></slot></span>`;
  }
}
customElements.define('nav-row', NavRow);

class FileTile extends HTMLElement {
  connectedCallback() {
    this.attachShadow({ mode: 'open' }).innerHTML = `
      <style>
        :host { display:flex; flex-direction:column; align-items:center; padding-bottom:8px; text-align:center; white-space:nowrap; }
        .i { height:46px; }
        win-icon { margin-top:-2px; }
      </style>
      <div class="i"><win-icon name="${this.getAttribute('icon')}" size="48"></win-icon></div>
      <div><slot></slot></div>`;
  }
}
customElements.define('file-tile', FileTile);

class BurnDialog extends HTMLElement {
  constructor() {
    super();
    this.attachShadow({ mode: 'open' }).innerHTML = `
      <style>
        :host { position:absolute; left:438px; top:175px; width:378px; height:335px; box-sizing:border-box; background:#fff; border:1px solid #6b6b6b; box-shadow:0 4px 18px rgba(0,0,0,.35); display:flex; flex-direction:column; }
        .cap { height:28px; flex:none; display:flex; align-items:center; justify-content:space-between; padding:0 9px 0 8px; }
        .body { flex:1; padding:0 10px; }
        h1 { margin:12px 0 0; font-size:16px; font-weight:400; line-height:22px; color:#003399; letter-spacing:-.2px; }
        .disc { display:flex; align-items:center; margin:13px 0 0 2px; height:20px; }
        .disc label { width:62px; }
        .disc .inp { width:238px; height:20px; box-sizing:border-box; border:1px solid #7a7a7a; padding-left:5px; line-height:18px; }
        .opt { display:flex; align-items:center; height:15px; font-weight:700; letter-spacing:.25px; }
        .rad { width:13px; height:13px; box-sizing:border-box; border:1px solid #5a5a5a; border-radius:50%; margin-right:3px; display:flex; align-items:center; justify-content:center; flex:none; }
        .rad i { width:7px; height:7px; border-radius:50%; background:#333; }
        .d { margin:1px 0 0 16px; width:330px; }
        a { display:inline-block; margin-top:19px; color:#0066cc; text-decoration:underline; outline:1px dotted #000; }
        .foot { height:40px; flex:none; box-sizing:border-box; background:#f0f0f0; border-top:1px solid #dfdfdf; display:flex; justify-content:flex-end; align-items:center; gap:8px; padding:0 11px 1px 0; }
        .btn { width:70px; height:20px; box-sizing:border-box; background:#e1e1e1; border:1px solid #adadad; display:flex; align-items:center; justify-content:center; }
        .btn.def { border:2px solid #0078d7; }
      </style>
      <div class="cap"><span>Burn a Disc</span>
        <svg width="11" height="11" viewBox="0 0 11 11"><path d="M.5 .5L10.500 10.500M10.500 .5L.5 10.500" stroke="#111"/></svg></div>
      <div class="body">
        <h1>How do you want to use this disc?</h1>
        <div class="disc"><label>Disc title:</label><div class="inp">Apr 22 2021</div></div>
        <div class="opt" style="margin-top:14px"><span class="rad"></span>Like a USB flash drive</div>
        <div class="d">Save, edit, and delete files on the disc anytime. The disc will<br>work on computers running Windows XP or later. (Live File<br>System)</div>
        <div class="opt" style="margin-top:12px"><span class="rad"><i></i></span>With a CD/DVD player</div>
        <div class="d" style="margin-top:2px">Burn files in groups and individual files can't be edited or<br>removed after burning. The disc will also work on most<br>computers. (Mastered)</div>
        <a>Which one should I choose?</a>
      </div>
      <div class="foot"><div class="btn def">Next</div><div class="btn">Cancel</div></div>`;
  }
}
customElements.define('burn-dialog', BurnDialog);

class TaskBar extends HTMLElement {
  constructor() {
    super();
    this.attachShadow({ mode: 'open' }).innerHTML = `
      <style>
        :host { display:flex; height:40px; flex:none; background:#d2e0ec; align-items:stretch; color:#000; }
        .start { width:49px; display:flex; align-items:center; justify-content:center; flex:none; }
        .search { width:342px; margin-top:1px; background:#fff; flex:none; display:flex; align-items:center; padding-left:11px; box-sizing:border-box; font-size:14.700px; gap:9px; border:1px solid #c3ced8; border-bottom:0; }
        .app { width:49px; display:flex; align-items:center; justify-content:center; position:relative; flex:none; box-sizing:border-box; }
        .app.run::after { content:""; position:absolute; left:4px; right:4px; bottom:0; height:2px; background:#0078d4; }
        .app.act::after { left:0; right:0; }
        .app.act { background:#e9f0f6; }
        .tray { margin-left:auto; padding-right:10px; display:flex; align-items:center; }
        .t { width:24px; display:flex; justify-content:center; flex:none; }
        .clock { width:58px; text-align:center; margin-left:3px; line-height:20px; white-space:nowrap; }
        .note { width:46px; display:flex; justify-content:center; }
      </style>
      <div class="start"><svg width="16" height="16" viewBox="0 0 16 16"><path d="M0 2.300L6.500 1.400V7.500H0ZM7.500 1.200L16 0V7.500H7.500ZM0 8.500H6.500V14.600L0 13.700ZM7.500 8.500H16V16L7.500 14.800Z" fill="#111"/></svg></div>
      <div class="search">
        <svg width="18" height="18" viewBox="0 0 18 18"><circle cx="11" cy="7" r="5.500" fill="none" stroke="#222" stroke-width="1.200"/><path d="M7 11L1.500 16.500" stroke="#222" stroke-width="1.300"/></svg>
        <span>Type here to search</span>
      </div>
      <div class="app"><svg width="16" height="16" viewBox="0 0 16 16"><circle cx="8" cy="8" r="6.500" fill="none" stroke="#111" stroke-width="2"/></svg></div>
      <div class="app" style="margin-left:2px"><win-icon name="edge" size="24"></win-icon></div>
      <div class="app"><win-icon name="chrome" size="24"></win-icon></div>
      <div class="app run"><win-icon name="wordtask" size="25"></win-icon></div>
      <div class="app run act"><win-icon name="explorer" size="24"></win-icon></div>
      <div class="app"><win-icon name="store" size="24"></win-icon></div>
      <div class="app" style="margin-left:2px"><win-icon name="ccleaner" size="24"></win-icon></div>
      <div class="tray">
        <div class="t"><svg width="14" height="9" viewBox="0 0 14 9"><path d="M1.500 7.500L7 2 12.500 7.500" fill="none" stroke="#111" stroke-width="1.100"/></svg></div>
        <div class="t"><svg width="16" height="16" viewBox="0 0 16 16"><path d="M1.500 5H9.500V11H1.500Z" fill="none" stroke="#222"/><path d="M10 7L14.500 5V11L10 9" fill="none" stroke="#222"/><path d="M2 2.500C4 1 7 1 9 2.500M2 13.500C4 15 7 15 9 13.500" fill="none" stroke="#222"/></svg></div>
        <div class="t"><svg width="17" height="17" viewBox="0 0 17 17"><path d="M.5 3.500V9H3M5.500 2.500H16.500V11.500H5.500Z" fill="none" stroke="#222"/><path d="M.5 .5H4.500V4.500H.5Z" fill="#d2e0ec" stroke="#222"/><path d="M11 12V15M7 15.500H15" stroke="#222"/></svg></div>
        <div class="t"><svg width="17" height="16" viewBox="0 0 17 16"><path d="M1 5.500H4L8 2V14L4 10.500H1Z" fill="none" stroke="#222"/><path d="M10 6A3 3 0 0 1 10 10M12 4A6 6 0 0 1 12 12M14 2.500A8 8 0 0 1 14 13.500" fill="none" stroke="#222"/></svg></div>
        <div class="clock">11:37 AM<br>4/22/2021</div>
        <div class="note"><svg width="17" height="16" viewBox="0 0 17 16"><path d="M.5 .5H16.500V12.500H10.500L8.500 15 6.500 12.500H.5Z" fill="none" stroke="#111"/></svg></div>
      </div>`;
  }
}
customElements.define('task-bar', TaskBar);
</script>
</body>
</html>
